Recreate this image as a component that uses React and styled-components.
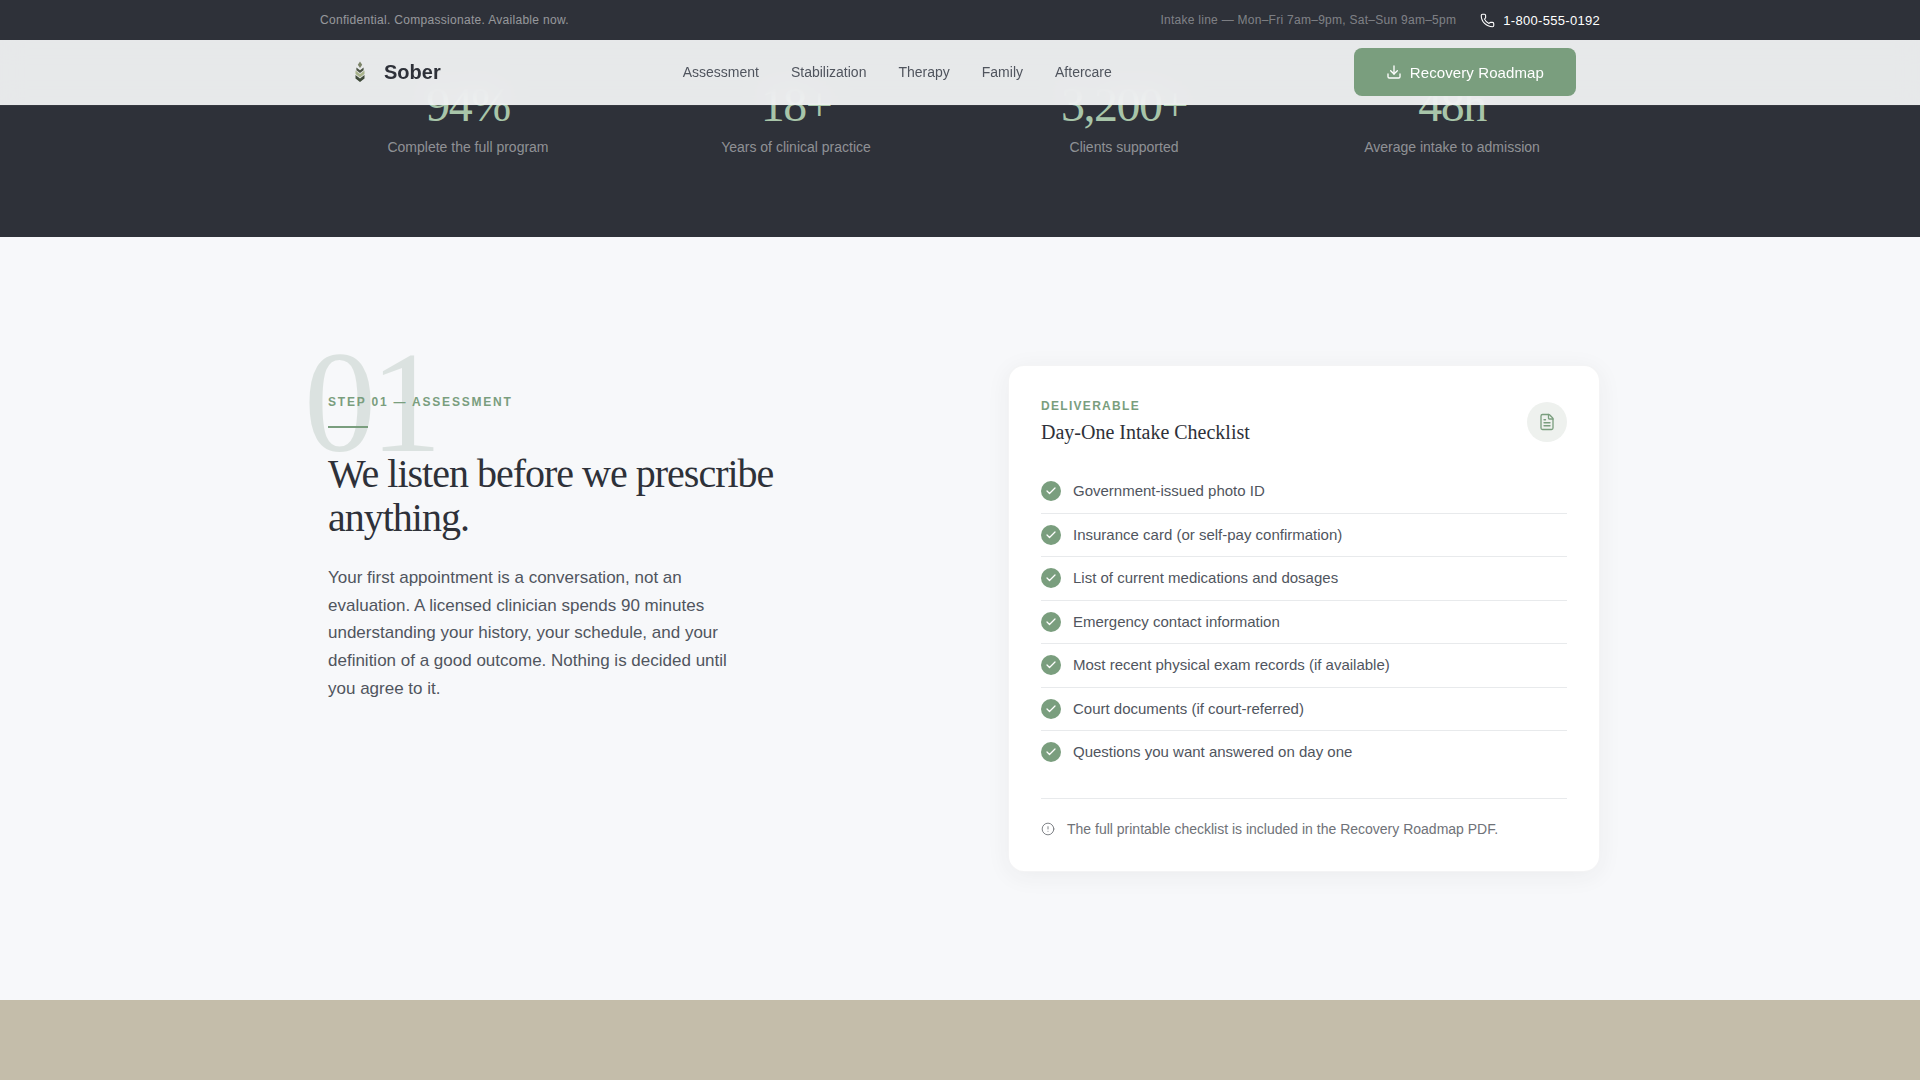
import React from "react";
import styled, { createGlobalStyle } from "styled-components";
import { Phone, Download, FileText, Check, CircleAlert } from "lucide-react";

const Global = createGlobalStyle`
  * { box-sizing: border-box; }
  html, body { margin: 0; padding: 0; background: #f7f8fa; }
  body { font-family: "Liberation Sans", Arial, sans-serif; overflow: hidden; height: 1080px; }
`;

const Page = styled.div`
  height: 1080px;
  overflow: hidden;
  display: flex;
  flex-direction: column;
`;
const Wrap = styled.div`
  width: 1280px;
  margin: 0 auto;
`;
const TopBar = styled.div`
  height: 40px;
  background: #2e3139;
  flex: none;
`;
const TopInner = styled(Wrap)`
  height: 100%;
  display: flex;
  align-items: center;
  justify-content: space-between;
`;
const TopText = styled.span`
  font-size: 12px;
  letter-spacing: 0.3px;
  color: rgba(255, 255, 255, 0.5);
`;
const TopRight = styled.div`
  display: flex;
  align-items: center;
  gap: 24px;
`;
const Intake = styled.span`
  font-size: 12px;
  letter-spacing: 0.27px;
  color: rgba(255, 255, 255, 0.4);
`;
const PhoneLink = styled.span`
  display: flex;
  align-items: center;
  gap: 8px;
  font-size: 13px;
  letter-spacing: 0.3px;
  color: #ffffff;
`;
const NavBar = styled.header`
  position: relative;
  z-index: 5;
  flex: none;
  height: 65px;
  background: rgba(247, 248, 250, 0.92);
  backdrop-filter: blur(12px);
  box-shadow: 0 1px 0 rgba(255, 255, 255, 0.04);
`;
const NavInner = styled(Wrap)`
  height: 100%;
  padding: 0 24px 1px;
  display: flex;
  align-items: center;
  justify-content: space-between;
`;
const Brand = styled.div`
  display: flex;
  align-items: center;
  gap: 8px;
`;
const BrandMark = styled.span`
  width: 32px;
  height: 32px;
  display: flex;
  align-items: center;
  justify-content: center;
`;
const BrandName = styled.span`
  font-size: 20px;
  font-weight: 700;
  color: #2e3139;
`;
const Links = styled.nav`
  display: flex;
  gap: 32px;
`;
const NavLink = styled.a`
  font-size: 14px;
  color: #50555e;
`;
const CtaButton = styled.button`
  height: 48px;
  padding: 0 32px;
  border: 0;
  border-radius: 8px;
  background: #7a9e7e;
  color: #fff;
  font: 400 15px "Liberation Sans", Arial, sans-serif;
  letter-spacing: 0.1px;
  display: flex;
  align-items: center;
  gap: 8px;
`;
const Stats = styled.section`
  flex: none;
  margin-top: -65px;
  height: 197px;
  background: #2e3139;
  overflow: hidden;
`;
const StatsGrid = styled(Wrap)`
  display: grid;
  grid-template-columns: repeat(4, 1fr);
  gap: 32px;
  margin-top: 36px;
`;
const Stat = styled.div`
  text-align: center;
`;
const StatValue = styled.div`
  font-family: "Liberation Serif", "Times New Roman", serif;
  font-size: 48px;
  line-height: 1.2;
  letter-spacing: -1.5px;
  color: #a8c5a9;
  margin-bottom: 3px;
`;
const StatLabel = styled.div`
  font-size: 14px;
  line-height: 1.5;
  color: rgba(255, 255, 255, 0.48);
`;
const StepSection = styled.section`
  flex: none;
  height: 763px;
  padding-top: 128.5px;
  background: #f7f8fa;
`;
const StepGrid = styled(Wrap)`
  display: grid;
  grid-template-columns: 1fr 592px;
  gap: 96px;
  align-items: start;
`;
const StepCopy = styled.div`
  position: relative;
  padding: 27.5px 8px 0;
`;
const BigNumber = styled.span`
  position: absolute;
  left: -16px;
  top: -64px;
  font-family: "Liberation Serif", "Times New Roman", serif;
  font-size: 144px;
  line-height: 1.4;
  letter-spacing: -6px;
  color: #72907a;
  opacity: 0.2;
`;
const Eyebrow = styled.div`
  position: relative;
  font-size: 12px;
  font-weight: 700;
  letter-spacing: 1.8px;
  line-height: 18px;
  color: #7a9e7e;
`;
const Rule = styled.div`
  position: relative;
  width: 40px;
  height: 2px;
  background: #7a9e7e;
  margin: 15px 0 24px;
`;
const Heading = styled.h2`
  position: relative;
  margin: 0 0 24px;
  font-family: "Liberation Serif", "Times New Roman", serif;
  font-weight: 400;
  font-size: 40px;
  line-height: 1.1;
  letter-spacing: -1px;
  color: #2e3139;
`;
const Body = styled.p`
  margin: 0;
  width: 420px;
  font-size: 17px;
  line-height: 27.7px;
  color: #50555e;
`;
const Card = styled.aside`
  background: #fff;
  border: 1px solid rgba(46, 49, 57, 0.05);
  border-radius: 16px;
  padding: 33px 32px 32px;
  margin-top: -1px;
  height: 507.5px;
  box-shadow: 0 4px 24px rgba(46, 49, 57, 0.06);
`;
const CardHead = styled.div`
  display: flex;
  justify-content: space-between;
  align-items: center;
  margin-bottom: 24.5px;
`;
const CardLabel = styled.div`
  font-size: 12px;
  font-weight: 700;
  letter-spacing: 1.3px;
  color: #7a9e7e;
  margin-bottom: 5px;
`;
const CardTitle = styled.h3`
  margin: 0;
  font-family: "Liberation Serif", "Times New Roman", serif;
  font-weight: 400;
  font-size: 20px;
  line-height: 1.4;
  color: #2e3139;
`;
const IconBubble = styled.span`
  width: 40px;
  height: 40px;
  border-radius: 50%;
  background: #eef1ee;
  color: #7a9e7e;
  display: flex;
  align-items: center;
  justify-content: center;
`;
const List = styled.ul`
  list-style: none;
  margin: 0;
  padding: 0;
`;
const Row = styled.li`
  display: flex;
  align-items: center;
  gap: 12px;
  padding: 10px 0;
  font-size: 15px;
  line-height: 22.5px;
  color: #50555e;
  border-bottom: 1px solid #e8eaec;
  &:last-child { border-bottom: 0; }
`;
const CheckDot = styled.span`
  width: 20px;
  height: 20px;
  border-radius: 50%;
  background: #7a9e7e;
  color: #fff;
  flex: none;
  display: flex;
  align-items: center;
  justify-content: center;
`;
const Note = styled.div`
  margin-top: 24.5px;
  padding-top: 20px;
  border-top: 1px solid #e8eaec;
  display: flex;
  align-items: center;
  gap: 12px;
  font-size: 14px;
  line-height: 20px;
  color: #6f7278;
`;
const Tan = styled.section`
  flex: 1;
  background: #c4bdaa;
`;

const Logo = () => (
  <svg width="12" height="22" viewBox="0 0 12 22" aria-hidden="true">
    <path d="M6 0.500 3.800 3.800 6 7 8.200 3.800Z" fill="#7c8468" />
    <path d="M6 21 1.500 17.500V14L6 17.500 10.500 14v3.500L6 21Z" fill="#3f4a3a" />
    <path d="M6 16.500 1.500 13V9.600L6 13l4.500-3.400V13L6 16.500Z" fill="#a9b48c" />
    <path d="M6 12 2.400 9.200V6.500L6 9.200l3.600-2.700v2.700L6 12Z" fill="#4a5242" />
  </svg>
);

const stats = [
  ["94%", "Complete the full program"],
  ["18+", "Years of clinical practice"],
  ["3,200+", "Clients supported"],
  ["48h", "Average intake to admission"],
];
const links = ["Assessment", "Stabilization", "Therapy", "Family", "Aftercare"];
const items = [
  "Government-issued photo ID",
  "Insurance card (or self-pay confirmation)",
  "List of current medications and dosages",
  "Emergency contact information",
  "Most recent physical exam records (if available)",
  "Court documents (if court-referred)",
  "Questions you want answered on day one",
];

export default function App() {
  return (
    <Page>
      <Global />
      <TopBar>
        <TopInner>
          <TopText>Confidential. Compassionate. Available now.</TopText>
          <TopRight>
            <Intake>Intake line — Mon–Fri 7am–9pm, Sat–Sun 9am–5pm</Intake>
            <PhoneLink>
              <Phone size={15} strokeWidth={1.75} />
              1-800-555-0192
            </PhoneLink>
          </TopRight>
        </TopInner>
      </TopBar>
      <NavBar>
        <NavInner>
          <Brand>
            <BrandMark><Logo /></BrandMark>
            <BrandName>Sober</BrandName>
          </Brand>
          <Links>
            {links.map((l) => <NavLink key={l}>{l}</NavLink>)}
          </Links>
          <CtaButton>
            <Download size={16} strokeWidth={2} />
            Recovery Roadmap
          </CtaButton>
        </NavInner>
      </NavBar>
      <Stats>
        <StatsGrid>
          {stats.map(([v, l]) => (
            <Stat key={l}>
              <StatValue>{v}</StatValue>
              <StatLabel>{l}</StatLabel>
            </Stat>
          ))}
        </StatsGrid>
      </Stats>
      <StepSection>
        <StepGrid>
          <StepCopy>
            <BigNumber>01</BigNumber>
            <Eyebrow>STEP 01 — ASSESSMENT</Eyebrow>
            <Rule />
            <Heading>We listen before we prescribe anything.</Heading>
            <Body>
              Your first appointment is a conversation, not an evaluation. A licensed clinician
              spends 90 minutes understanding your history, your schedule, and your definition of a
              good outcome. Nothing is decided until you agree to it.
            </Body>
          </StepCopy>
          <Card>
            <CardHead>
              <div>
                <CardLabel>DELIVERABLE</CardLabel>
                <CardTitle>Day-One Intake Checklist</CardTitle>
              </div>
              <IconBubble><FileText size={18} strokeWidth={1.75} /></IconBubble>
            </CardHead>
            <List>
              {items.map((t) => (
                <Row key={t}>
                  <CheckDot><Check size={12} strokeWidth={2.5} /></CheckDot>
                  {t}
                </Row>
              ))}
            </List>
            <Note>
              <CircleAlert size={14} strokeWidth={1.5} />
              The full printable checklist is included in the Recovery Roadmap PDF.
            </Note>
          </Card>
        </StepGrid>
      </StepSection>
      <Tan />
    </Page>
  );
}
